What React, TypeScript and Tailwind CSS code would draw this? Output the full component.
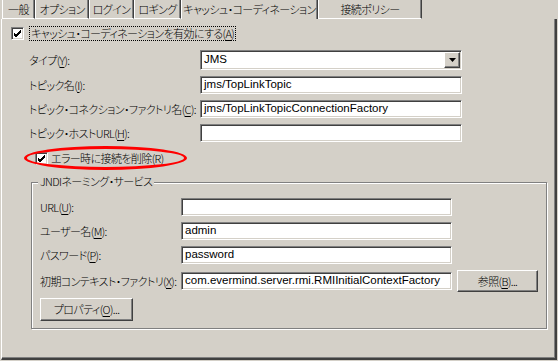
import React from "react";

const jp = "[font-family:'Noto_Sans_CJK_JP',sans-serif] [font-feature-settings:'palt'] font-light tracking-[-0.6px]";

const Mn = ({ pre, k, post = "" }: { pre: string; k: string; post?: string }) => (
    <span className="whitespace-nowrap">
        {pre}(<u className="underline-offset-2">{k}</u>){post}
    </span>
);

const Check = () => (
    <div className="w-[13px] h-[13px] bg-white border-t border-l border-t-[#808080] border-l-[#808080] border-b border-r border-b-white border-r-white shadow-[inset_1px_1px_0_#404040,inset_-1px_-1px_0_#d4d0c8] flex items-center justify-center shrink-0">
        <svg width="9" height="9" viewBox="0 0 9 9">
            <path d="M1 4 L3 6 L8 1 M1 5 L3 7 L8 2 M1 6 L3 8 L8 3" stroke="#000" strokeWidth="1" fill="none" />
        </svg>
    </div>
);

const Field = ({ value = "", w }: { value?: string; w: string }) => (
    <div className={`${w} h-[18px] shrink-0 bg-white border-t border-l border-t-[#808080] border-l-[#808080] border-b border-r border-b-white border-r-white shadow-[inset_1px_1px_0_#404040,inset_-1px_-1px_0_#d4d0c8] pl-[3px] flex items-center text-[11.5px] leading-none [font-family:'Liberation_Sans',sans-serif] font-normal tracking-normal text-black whitespace-nowrap overflow-hidden`}>
        {value}
    </div>
);

const Btn = ({ children, w, h }: { children: React.ReactNode; w: string; h: string }) => (
    <div className={`${w} ${h} bg-[#d4d0c8] border-t border-l border-t-white border-l-white border-b border-r border-b-[#404040] border-r-[#404040] shadow-[inset_-1px_-1px_0_#808080] flex items-center justify-center leading-none`}>
        {children}
    </div>
);

const tabs = [
    { t: "一般", w: "w-[33px]" },
    { t: "オプション", w: "w-[54px]" },
    { t: "ログイン", w: "w-[45px]" },
    { t: "ロギング", w: "w-[47px]" },
    { t: "キャッシュ・コーディネーション", w: "w-[137px]", on: true },
    { t: "接続ポリシー", w: "w-[104px]" },
];

export default function App() {
    return (
        <div className={`w-[558px] h-[361px] bg-[#d4d0c8] text-black text-[11px] overflow-hidden ${jp}`}>
            <div className="flex h-[19px] pl-[2px]">
                {tabs.map((tab) => (
                    <div
                        key={tab.t}
                        className={`${tab.w} h-full flex items-center justify-center whitespace-nowrap border-l border-l-white border-r border-r-[#404040] shadow-[inset_-1px_0_0_#808080] leading-none ${tab.on ? "" : "border-b border-b-white"}`}
                    >
                        {tab.t}
                    </div>
                ))}
            </div>
            <div className="relative ml-[1px] w-[556px] h-[341px] border-l border-l-white border-r-2 border-r-[#404040] border-b-2 border-b-[#404040] shadow-[inset_-1px_-1px_0_#808080] pt-[8px]">
                <div className="flex items-center h-[13px] pl-[9px]">
                    <Check />
                    <div className="ml-[5px] px-[1px] h-[15px] flex items-center border border-dotted border-black leading-none">
                        <Mn pre="キャッシュ・コーディネーションを有効にする" k="A" />
                    </div>
                </div>

                <div className="flex flex-col gap-[6px] mt-[10px] pl-[27px]">
                    <div className="flex items-center h-[20px]">
                        <div className="w-[171px] leading-none"><Mn pre="タイプ" k="Y" post=":" /></div>
                        <div className="w-[262px] h-[20px] bg-white border-t border-l border-t-[#808080] border-l-[#808080] border-b border-r border-b-white border-r-white shadow-[inset_1px_1px_0_#404040,inset_-1px_-1px_0_#d4d0c8] flex items-center justify-between pl-[3px] pr-[1px] [font-family:'Liberation_Sans',sans-serif] text-[11.5px] font-normal tracking-normal leading-none">
                            <span>JMS</span>
                            <div className="w-[16px] h-[16px] bg-[#d4d0c8] border-t border-l border-t-white border-l-white border-b border-r border-b-[#404040] border-r-[#404040] shadow-[inset_-1px_-1px_0_#808080] flex items-center justify-center">
                                <svg width="7" height="4" viewBox="0 0 7 4"><path d="M0 0 H7 L3.5 4 Z" fill="#000" /></svg>
                            </div>
                        </div>
                    </div>
                    <div className="flex items-center h-[18px]">
                        <div className="w-[171px] leading-none"><Mn pre="トピック名" k="I" post=":" /></div>
                        <Field w="w-[262px]" value="jms/TopLinkTopic" />
                    </div>
                    <div className="flex items-center h-[18px]">
                        <div className="w-[171px] leading-none"><Mn pre="トピック・コネクション・ファクトリ名" k="C" post=":" /></div>
                        <Field w="w-[262px]" value="jms/TopLinkTopicConnectionFactory" />
                    </div>
                    <div className="flex items-center h-[18px]">
                        <div className="w-[171px] leading-none"><Mn pre="トピック・ホストURL" k="H" post=":" /></div>
                        <Field w="w-[262px]" />
                    </div>
                </div>

                <div className="relative flex items-center h-[13px] mt-[10px] pl-[33px]">
                    <Check />
                    <div className="ml-[3px] leading-none"><Mn pre="エラー時に接続を削除" k="R" /></div>
                    <div className="absolute left-[22px] top-[-6px] w-[163px] h-[24px] rounded-[50%] border-[3px] border-[#f00]" />
                </div>

                <div className="relative ml-[29px] mt-[17px] w-[516px] h-[147px] border border-[#808080] shadow-[inset_1px_1px_0_white,1px_1px_0_white] pt-[15px] pl-[8px]">
                    <div className="absolute left-[6px] top-[-7px] px-[2px] bg-[#d4d0c8] leading-none whitespace-nowrap">JNDIネーミング・サービス</div>
                    <div className="flex flex-col gap-[6px]">
                        <div className="flex items-center h-[18px]">
                            <div className="w-[141px] leading-none"><Mn pre="URL" k="U" post=":" /></div>
                            <Field w="w-[271px]" />
                        </div>
                        <div className="flex items-center h-[18px]">
                            <div className="w-[141px] leading-none"><Mn pre="ユーザー名" k="M" post=":" /></div>
                            <Field w="w-[271px]" value="admin" />
                        </div>
                        <div className="flex items-center h-[18px]">
                            <div className="w-[141px] leading-none"><Mn pre="パスワード" k="P" post=":" /></div>
                            <Field w="w-[271px]" value="password" />
                        </div>
                        <div className="flex items-center h-[22px]">
                            <div className="w-[141px] shrink-0 leading-none"><Mn pre="初期コンテキスト・ファクトリ" k="X" post=":" /></div>
                            <Field w="w-[271px]" value="com.evermind.server.rmi.RMIInitialContextFactory" />
                            <div className="ml-[5px]">
                                <Btn w="w-[81px]" h="h-[22px]"><Mn pre="参照" k="B" post="..." /></Btn>
                            </div>
                        </div>
                    </div>
                    <div className="mt-[6px]">
                        <Btn w="w-[93px]" h="h-[23px]"><Mn pre="プロパティ" k="O" post="..." /></Btn>
                    </div>
                </div>
            </div>
        </div>
    );
}
